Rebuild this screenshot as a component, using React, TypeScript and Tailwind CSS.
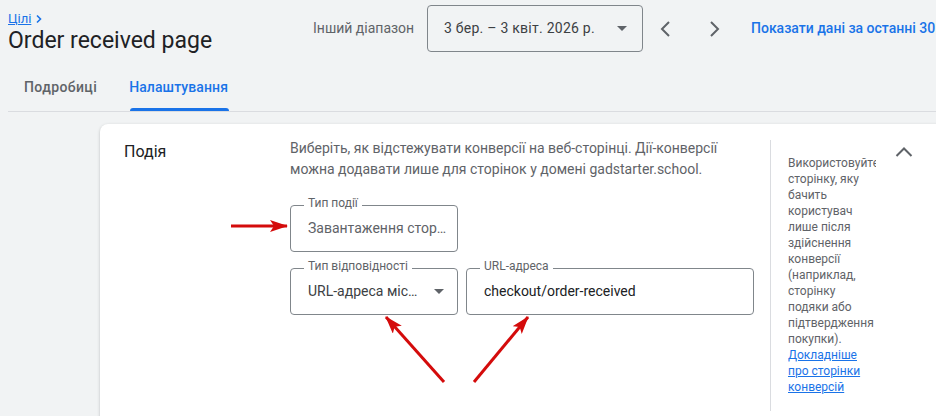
import type { ReactNode } from 'react'

// ═══════════════════════════════════════════════════════════════════
// SMALL PIECES
// ═══════════════════════════════════════════════════════════════════
function Chevron({ dir, className }: { dir: 'left' | 'right' | 'up'; className?: string }) {
  const pts = {
    left: '15,5 8,12 15,19',
    right: '9,5 16,12 9,19',
    up: '4.5,16 12,8.5 19.5,16',
  }
  return (
    <svg width="24" height="24" viewBox="0 0 24 24" fill="none" className={className}>
      <polyline points={pts[dir]} stroke="#5f6368" strokeWidth="2" />
    </svg>
  )
}

function Caret({ className }: { className?: string }) {
  return (
    <svg width="10" height="5" viewBox="0 0 10 5" className={className}>
      <path d="M0 0h10L5 5z" fill="#5f6368" />
    </svg>
  )
}

function Field({ label, width, children }: { label: string; width: string; children: ReactNode }) {
  return (
    <div className={`relative h-[47px] ${width} shrink-0 border border-[#80868b] rounded-[4px] flex items-center pl-[17px] pr-[13px]`}>
      <span className="absolute -top-[10px] left-[13px] px-[4px] bg-white text-[12px] leading-[14px] text-[#5f6368] whitespace-nowrap">
        {label}
      </span>
      {children}
    </div>
  )
}

// ═══════════════════════════════════════════════════════════════════
// APP
// ═══════════════════════════════════════════════════════════════════
export default function App() {
  return (
    <div className="relative w-[936px] h-[416px] overflow-hidden bg-[#f1f3f4] font-['Roboto',sans-serif]">
      {/* header */}
      <div className="flex items-start pl-2 pt-[5px]">
        <div className="w-[305px] shrink-0 pt-[6px]">
          <div className="flex items-center h-[15px] text-[13px] leading-[15px] text-[#1a73e8]">
            <span className="underline">Цілі</span>
            <svg width="8" height="10" viewBox="0 0 8 10" className="ml-[4px]">
              <polyline points="2,1.5 5.5,5 2,8.5" fill="none" stroke="#1a73e8" strokeWidth="1.6" />
            </svg>
          </div>
          <h1 className="text-[23px] leading-[30px] text-[#202124]">Order received page</h1>
        </div>

        <div className="flex items-center h-[47px] shrink-0">
          <span className="w-[114px] shrink-0 text-[14px] text-[#5f6368]">Інший діапазон</span>
          <div className="w-[216px] shrink-0 h-[47px] border border-[#80868b] rounded-[4px] flex items-center justify-between pl-[16px] pr-[15px]">
            <span className="text-[14px] tracking-[0.25px] text-[#3c4043]">3 бер. – 3 квіт. 2026 р.</span>
            <Caret />
          </div>
          <div className="ml-[3px] w-10 h-10 shrink-0 flex items-center justify-center">
            <Chevron dir="left" />
          </div>
          <div className="ml-[8px] w-10 h-10 shrink-0 flex items-center justify-center">
            <Chevron dir="right" />
          </div>
          <span className="ml-[17px] text-[14px] font-medium text-[#1a73e8] whitespace-nowrap">
            Показати дані за останні 30 днів
          </span>
        </div>
      </div>

      {/* tabs */}
      <div className="ml-2 mt-[8px] flex border-b border-[#dadce0]">
        <div className="h-[47px] px-4 flex items-center text-[14px] tracking-[0.4px] font-medium text-[#5f6368]">Подробиці</div>
        <div className="relative h-[47px] px-4 flex items-center text-[14px] tracking-[0.1px] font-medium text-[#1a73e8]">
          Налаштування
          <span className="absolute bottom-0 left-[17px] right-[15px] h-[3px] rounded-t-[3px] bg-[#1a73e8]" />
        </div>
      </div>

      {/* card */}
      <div className="ml-[100px] mt-[12px] w-[900px] h-[320px] bg-white rounded-tl-[8px] shadow-[0_1px_3px_rgba(60,64,67,0.3)] flex">
        <div className="w-[190px] shrink-0 pl-6 pt-4 text-[16px] leading-[24px] text-[#202124]">Подія</div>

        <div className="w-[480px] shrink-0 pt-[14px]">
          <p className="w-[463px] text-[14px] leading-[21px] text-[#5f6368]">
            Виберіть, як відстежувати конверсії на веб-сторінці. Дії-конверсії можна додавати лише для сторінок у домені gadstarter.school.
          </p>

          <div className="mt-[25px]">
            <Field label="Тип події" width="w-[168px]">
              <span className="block w-[141px] shrink-0 truncate text-[14px] text-[#5f6368]">Завантаження сторінки</span>
            </Field>
          </div>

          <div className="mt-[16px] flex gap-[8px]">
            <Field label="Тип відповідності" width="w-[168px]">
              <span className="block w-[116px] shrink-0 truncate text-[14px] text-[#3c4043]">URL-адреса містить</span>
              <Caret className="ml-auto shrink-0" />
            </Field>
            <Field label="URL-адреса" width="w-[288px]">
              <span className="text-[14px] text-[#202124]">checkout/order-received</span>
            </Field>
          </div>
        </div>

        <div className="mt-4 h-[271px] shrink-0 border-l border-[#dadce0]" />

        <div className="pl-[17px] pt-[31px] w-[105px] shrink-0">
          <p className="w-[88px] overflow-hidden text-[12px] leading-[16px] text-[#5f6368]">
            Використовуйте сторінку, яку бачить користувач лише після здійснення конверсії (наприклад, сторінку подяки або підтвердження покупки).{' '}
            <span className="text-[#1a73e8] underline">Докладніше про сторінки конверсій</span>
          </p>
        </div>
        <div className="mt-4 ml-[16px] shrink-0">
          <Chevron dir="up" />
        </div>
      </div>

      {/* red annotation arrows */}
      <svg className="absolute inset-0 pointer-events-none" width="936" height="416" viewBox="0 0 936 416">
        <defs>
          <marker id="ah" markerUnits="userSpaceOnUse" markerWidth="18" markerHeight="12" refX="17" refY="6" orient="auto">
            <path d="M0,0 L18,6 L0,12 L4,6 z" fill="#d40b0b" />
          </marker>
        </defs>
        <line x1="231" y1="226" x2="287" y2="226" stroke="#d40b0b" strokeWidth="3" markerEnd="url(#ah)" />
        <line x1="444" y1="382" x2="386" y2="317" stroke="#d40b0b" strokeWidth="3" markerEnd="url(#ah)" />
        <line x1="474" y1="382" x2="528" y2="317" stroke="#d40b0b" strokeWidth="3" markerEnd="url(#ah)" />
      </svg>
    </div>
  )
}
